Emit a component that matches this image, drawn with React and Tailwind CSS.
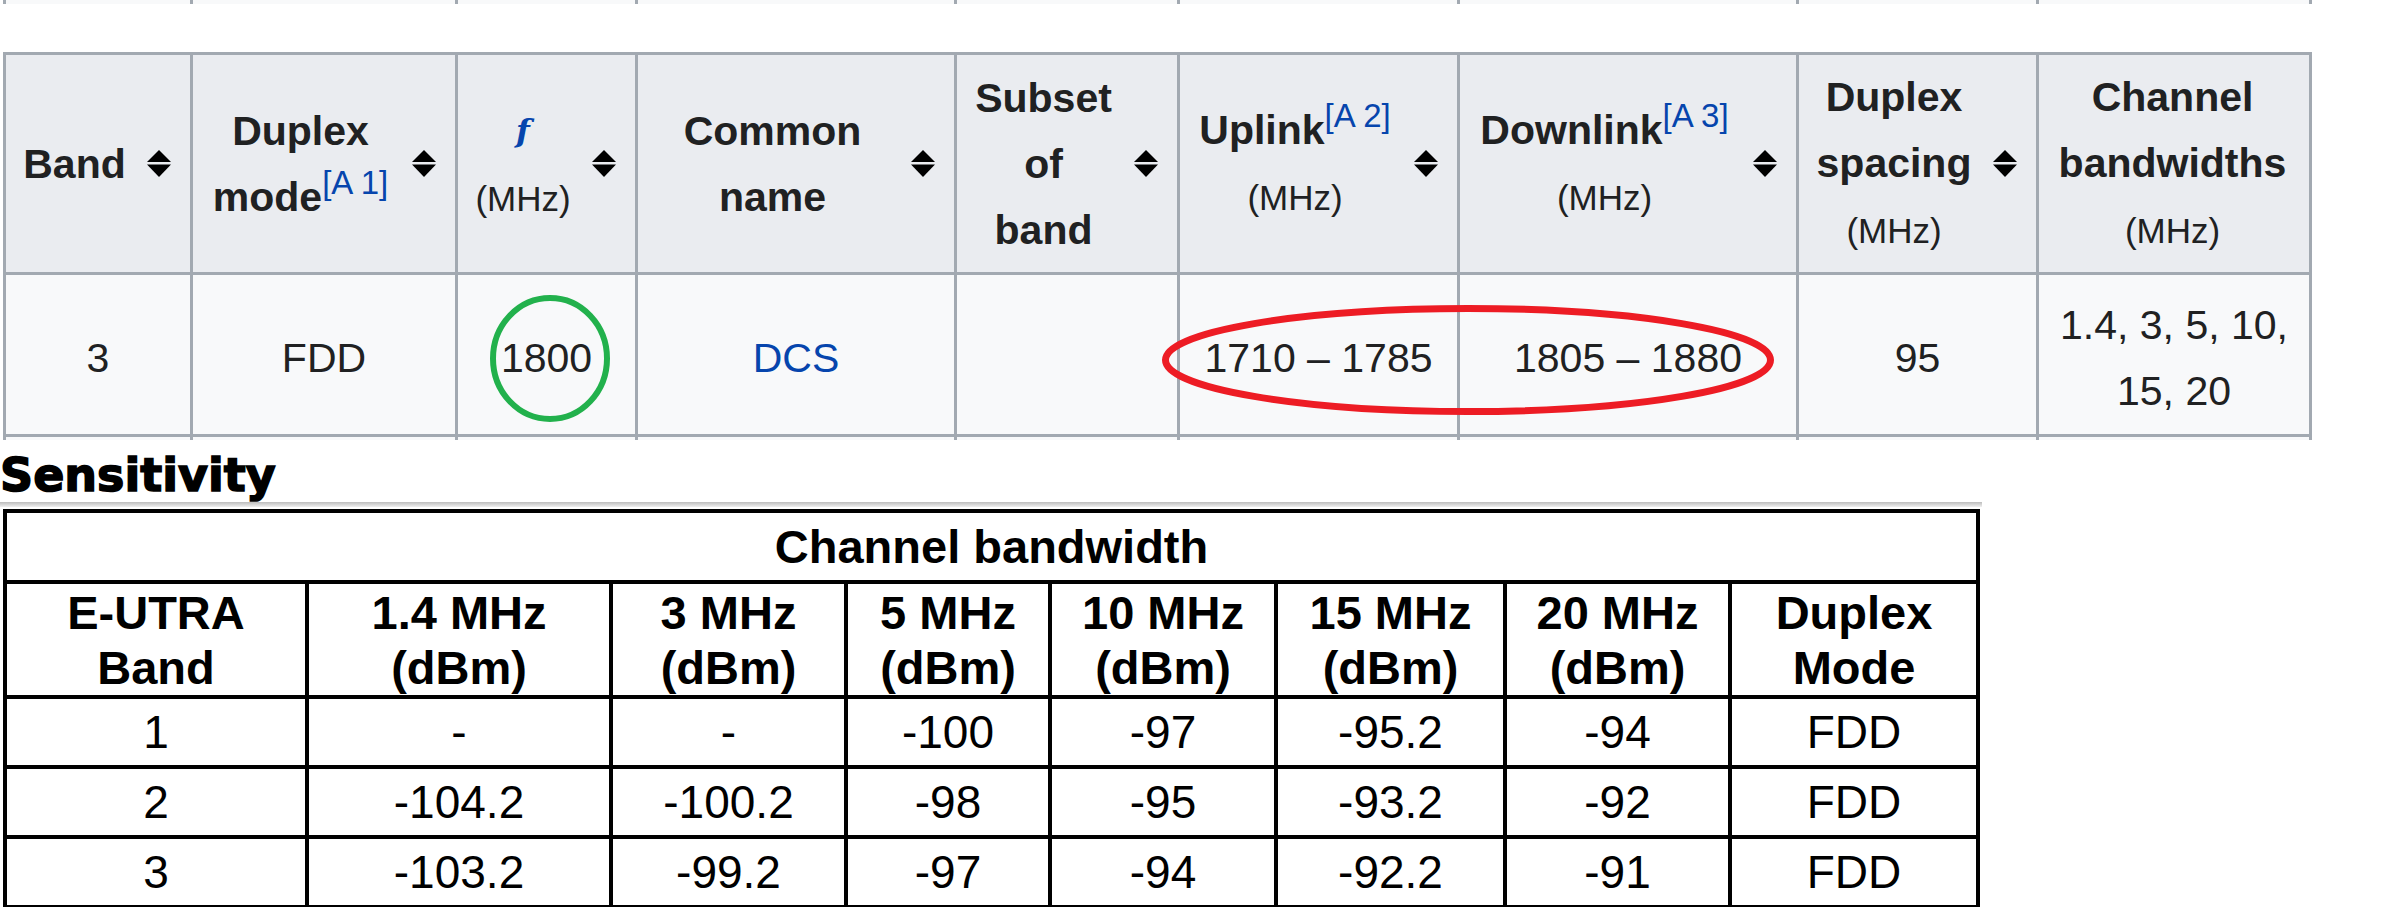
import React from 'react'

const SortIcon = () => (
    <svg width="24" height="27" viewBox="0 0 24 27" className="ml-5 shrink-0">
        <path d="M12 0L24 12H0Z" fill="#000" />
        <path d="M0 14.5H24L12 27Z" fill="#000" />
    </svg>
)

const Note = ({ n }) => (
    <sup className="text-[33px] font-normal text-[#0645ad]">[A {n}]</sup>
)

const Mhz = () => <span className="text-[35px] font-normal">(MHz)</span>

const Th = ({ sort = true, children }) => (
    <th className="border-r-[3px] border-b-[3px] border-[#a2a9b1] bg-[#eaecf0] p-0 align-middle font-bold">
        <div className="flex items-center py-2 pl-4 pr-[19px]">
            <div className="flex-1 whitespace-nowrap text-center">{children}</div>
            {sort && <SortIcon />}
        </div>
    </th>
)

const Td = ({ children }) => (
    <td className="border-r-[3px] border-b-[3px] border-[#a2a9b1] bg-[#f8f9fa] px-4 pt-[11px] pb-[5px] text-center align-middle">
        {children}
    </td>
)

const Cols = () => (
    <colgroup>
        <col className="w-[187px]" />
        <col className="w-[265px]" />
        <col className="w-[180px]" />
        <col className="w-[319px]" />
        <col className="w-[223px]" />
        <col className="w-[280px]" />
        <col className="w-[339px]" />
        <col className="w-[240px]" />
        <col className="w-[273px]" />
    </colgroup>
)

const sensitivity = [
    ['1', '-', '-', '-100', '-97', '-95.2', '-94', 'FDD'],
    ['2', '-104.2', '-100.2', '-98', '-95', '-93.2', '-92', 'FDD'],
    ['3', '-103.2', '-99.2', '-97', '-94', '-92.2', '-91', 'FDD'],
]

const heads = [
    ['E-UTRA', 'Band'],
    ['1.4 MHz', '(dBm)'],
    ['3 MHz', '(dBm)'],
    ['5 MHz', '(dBm)'],
    ['10 MHz', '(dBm)'],
    ['15 MHz', '(dBm)'],
    ['20 MHz', '(dBm)'],
    ['Duplex', 'Mode'],
]

export default function App() {
    return (
        <div className="h-[907px] w-[2407px] overflow-hidden bg-white font-['Liberation_Sans',Arial,sans-serif]">
            {/* band table (cut off at the paste line) */}
            <div className="relative h-[440px] overflow-hidden">
                <div className="ml-[3px] flex h-[4px] w-[2309px] border-l-[3px] border-[#a2a9b1] bg-[#f8f9fa]">
                    <div className="w-[187px] border-r-[3px] border-[#a2a9b1]" />
                    <div className="w-[265px] border-r-[3px] border-[#a2a9b1]" />
                    <div className="w-[180px] border-r-[3px] border-[#a2a9b1]" />
                    <div className="w-[319px] border-r-[3px] border-[#a2a9b1]" />
                    <div className="w-[223px] border-r-[3px] border-[#a2a9b1]" />
                    <div className="w-[280px] border-r-[3px] border-[#a2a9b1]" />
                    <div className="w-[339px] border-r-[3px] border-[#a2a9b1]" />
                    <div className="w-[240px] border-r-[3px] border-[#a2a9b1]" />
                    <div className="w-[273px] border-r-[3px] border-[#a2a9b1]" />
                </div>

                <table className="ml-[3px] mt-[48px] w-[2309px] table-fixed border-separate border-spacing-0 border-l-[3px] border-t-[3px] border-[#a2a9b1] text-[41px] leading-[66px] text-[#202122]">
                    <Cols />
                    <thead>
                        <tr className="h-[220px]">
                            <Th>Band</Th>
                            <Th>Duplex<br />mode<Note n="1" /></Th>
                            <Th>
                                <a className="font-['DejaVu_Serif',serif] text-[32px] font-bold italic text-[#0645ad]">f</a>
                                <br />
                                <Mhz />
                            </Th>
                            <Th>Common<br />name</Th>
                            <Th>Subset<br />of<br />band</Th>
                            <Th>Uplink<Note n="2" /><br /><Mhz /></Th>
                            <Th>Downlink<Note n="3" /><br /><Mhz /></Th>
                            <Th>Duplex<br />spacing<br /><Mhz /></Th>
                            <Th sort={false}>Channel<br />bandwidths<br /><Mhz /></Th>
                        </tr>
                    </thead>
                    <tbody>
                        <tr className="h-[162px]">
                            <Td>3</Td>
                            <Td>FDD</Td>
                            <Td>1800</Td>
                            <Td><a className="text-[#0645ad]">DCS</a></Td>
                            <Td />
                            <Td>1710 – 1785</Td>
                            <Td>1805 – 1880</Td>
                            <Td>95</Td>
                            <Td>1.4, 3, 5, 10,<br />15, 20</Td>
                        </tr>
                        <tr className="h-[80px]">
                            <Td /><Td /><Td /><Td /><Td /><Td /><Td /><Td /><Td />
                        </tr>
                    </tbody>
                </table>

                {/* hand-drawn marks */}
                <svg className="absolute left-[487px] top-[292px]" width="126" height="133" viewBox="0 0 126 133">
                    <ellipse cx="63" cy="66.5" rx="57" ry="60.5" fill="none" stroke="#22b14c" strokeWidth="6" />
                </svg>
                <svg className="absolute left-[1158px] top-[300px]" width="620" height="120" viewBox="0 0 620 120">
                    <ellipse cx="310" cy="60" rx="302.5" ry="51.5" fill="none" stroke="#ed1c24" strokeWidth="7" />
                </svg>
            </div>

            {/* pasted sensitivity table */}
            <div className="w-[1982px]">
                <div className="h-[62px] pt-[8px] font-['DejaVu_Sans',sans-serif] text-[46px] font-bold leading-[54px] text-black [-webkit-text-stroke:1.5px_#000]">
                    Sensitivity
                </div>
                <div className="h-[5px] bg-linear-to-b from-[#bcbcbc] to-[#f0f0f0]" />
                <table className="ml-[3px] mt-[2px] w-[1977px] table-fixed border-separate border-spacing-0 border-l-4 border-t-4 border-black text-black">
                    <colgroup>
                        <col className="w-[302px]" />
                        <col className="w-[304px]" />
                        <col className="w-[235px]" />
                        <col className="w-[204px]" />
                        <col className="w-[226px]" />
                        <col className="w-[229px]" />
                        <col className="w-[225px]" />
                        <col className="w-[248px]" />
                    </colgroup>
                    <tbody>
                        <tr className="h-[71px]">
                            <th colSpan={8} className="border-r-4 border-b-4 border-black p-0 text-center align-middle text-[47px] font-bold leading-[55px]">
                                Channel bandwidth
                            </th>
                        </tr>
                        <tr className="h-[115px]">
                            {heads.map((h, i) => (
                                <th key={i} className="border-r-4 border-b-4 border-black p-0 text-center align-middle text-[47px] font-bold leading-[55px]">
                                    {h[0]}<br />{h[1]}
                                </th>
                            ))}
                        </tr>
                        {sensitivity.map((row, i) => (
                            <tr key={i} className="h-[70px]">
                                {row.map((v, j) => (
                                    <td key={j} className="border-r-4 border-b-4 border-black p-0 text-center align-middle text-[46px] leading-[55px]">
                                        {v}
                                    </td>
                                ))}
                            </tr>
                        ))}
                    </tbody>
                </table>
            </div>
        </div>
    )
}
